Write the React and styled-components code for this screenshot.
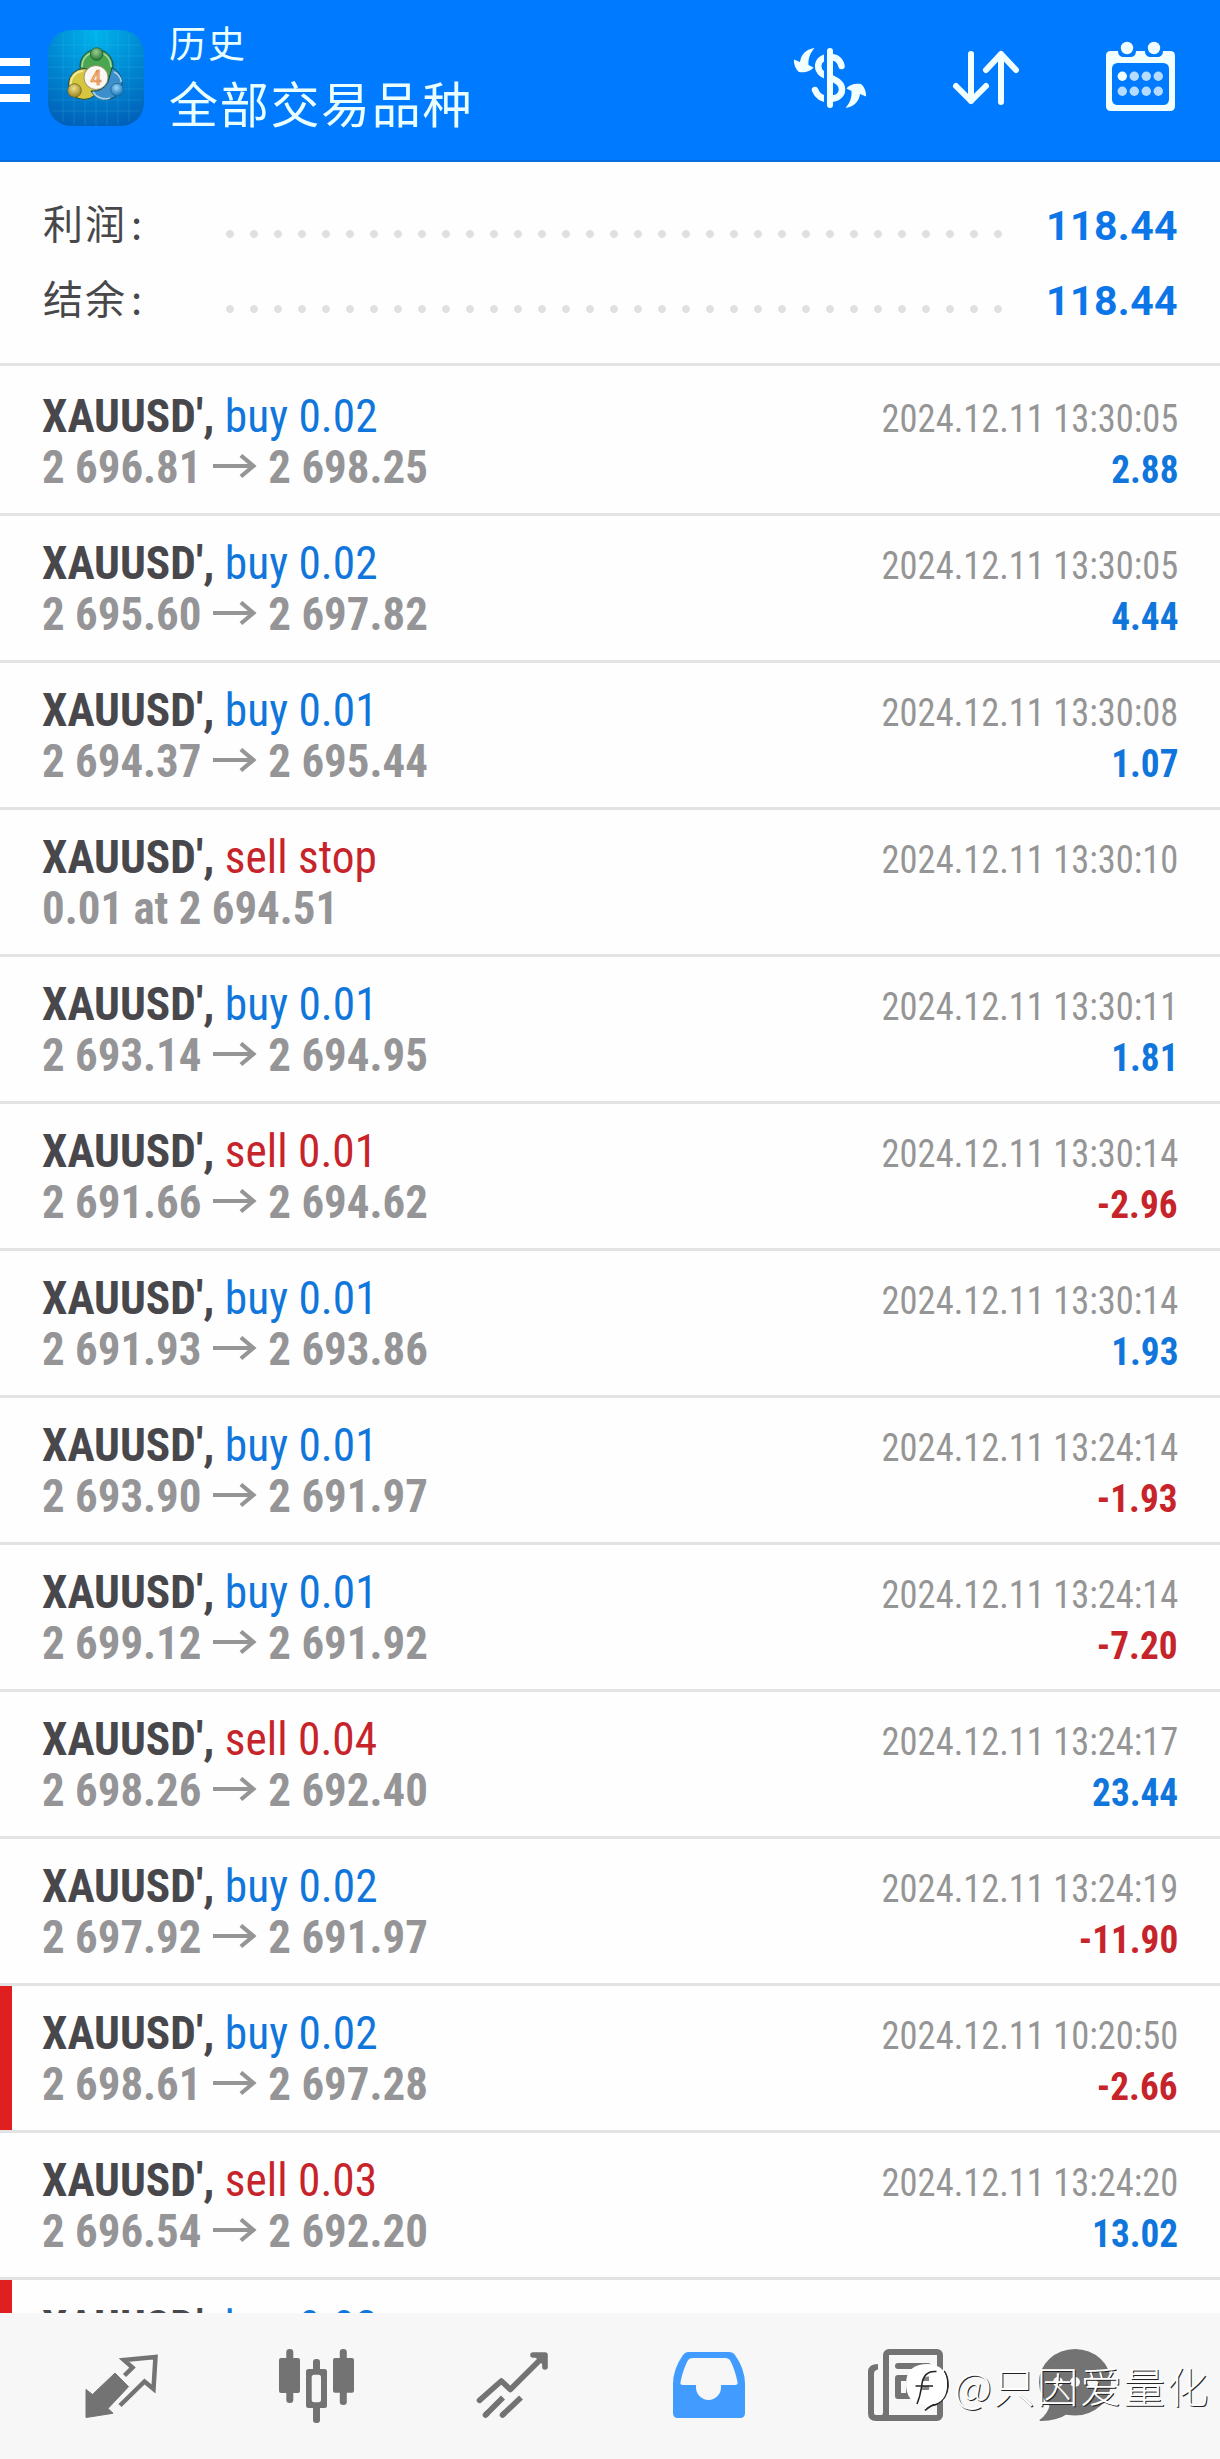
import React from "react";
import styled, { createGlobalStyle } from "styled-components";

const orders = [
  { type: "buy 0.02", open: "2 696.81", close: "2 698.25", time: "2024.12.11 13:30:05", profit: "2.88" },
  { type: "buy 0.02", open: "2 695.60", close: "2 697.82", time: "2024.12.11 13:30:05", profit: "4.44" },
  { type: "buy 0.01", open: "2 694.37", close: "2 695.44", time: "2024.12.11 13:30:08", profit: "1.07" },
  { type: "sell stop", pending: "0.01 at 2 694.51", time: "2024.12.11 13:30:10" },
  { type: "buy 0.01", open: "2 693.14", close: "2 694.95", time: "2024.12.11 13:30:11", profit: "1.81" },
  { type: "sell 0.01", open: "2 691.66", close: "2 694.62", time: "2024.12.11 13:30:14", profit: "-2.96" },
  { type: "buy 0.01", open: "2 691.93", close: "2 693.86", time: "2024.12.11 13:30:14", profit: "1.93" },
  { type: "buy 0.01", open: "2 693.90", close: "2 691.97", time: "2024.12.11 13:24:14", profit: "-1.93" },
  { type: "buy 0.01", open: "2 699.12", close: "2 691.92", time: "2024.12.11 13:24:14", profit: "-7.20" },
  { type: "sell 0.04", open: "2 698.26", close: "2 692.40", time: "2024.12.11 13:24:17", profit: "23.44" },
  { type: "buy 0.02", open: "2 697.92", close: "2 691.97", time: "2024.12.11 13:24:19", profit: "-11.90" },
  { type: "buy 0.02", open: "2 698.61", close: "2 697.28", time: "2024.12.11 10:20:50", profit: "-2.66", marked: true },
  { type: "sell 0.03", open: "2 696.54", close: "2 692.20", time: "2024.12.11 13:24:20", profit: "13.02" },
  { type: "buy 0.02", open: "", close: "", time: "", marked: true },
];

const DollarIcon = () => (
  <svg width="80" height="80" viewBox="0 0 80 80" fill="none">
    <path
      d="M51.500 28C50 21.500 46 19 40 19C32 19 28.200 23 28.200 28C28.200 35 34 37 40 39.500C48 42.500 52 46 52 51.500C52 58 46 61 38.500 61C31 61 27.500 58 25 52"
      stroke="#f2ffff"
      strokeWidth="6.500"
      strokeLinecap="round"
    />
    <path d="M35.500 12V68" stroke="#007aff" strokeWidth="3" />
    <path d="M40 13V67" stroke="#f2ffff" strokeWidth="6" strokeLinecap="round" />
    <path id="swap" d="M24.500 10C15 11.500 11 17 10 24L4 21.500C3.500 26 6 32 9 34C15 35 21 33 23.500 29.500L18.500 27C18 21 20 15 24.500 10Z" fill="#f2ffff" />
    <use href="#swap" transform="rotate(180 40 40)" />
  </svg>
);

const SortIcon = () => (
  <svg width="80" height="80" viewBox="-1 0 80 80" fill="none" stroke="#f2ffff" strokeWidth="6" strokeLinecap="round" strokeLinejoin="round">
    <path d="M25 16V63M10 48L25 63L40 48" />
    <path d="M55 64V16M40 32L55 16L70 32" />
  </svg>
);

const CalendarIcon = () => (
  <svg width="80" height="80" viewBox="0 0 80 80">
    <rect x="6" y="13" width="69" height="60" rx="4.500" fill="#f2ffff" />
    <rect x="12" y="25" width="57" height="42" rx="5.500" fill="#007aff" />
    {[27, 54].map((x) => (
      <g key={x}>
        <rect x={x - 9} y="1" width="18" height="18" rx="5.500" fill="#007aff" />
        <circle cx={x} cy="10" r="6.200" fill="#f2ffff" />
      </g>
    ))}
    {[38.3, 53.3].map((y) =>
      [22.3, 34.3, 46.3, 58.3].map((x) => (
        <circle key={x + "-" + y} cx={x} cy={y} r="4.700" fill={x === 22.3 && y === 38.3 ? "#f2ffff" : "#b5dcff"} />
      ))
    )}
  </svg>
);

const Logo = () => (
  <svg width="96" height="96" viewBox="0 0 96 96">
    <defs>
      <radialGradient id="tile" cx="50%" cy="5%" r="100%">
        <stop offset="0" stopColor="#00b4ec" />
        <stop offset="0.5" stopColor="#0088d2" />
        <stop offset="1" stopColor="#005fb8" />
      </radialGradient>
      <radialGradient id="green" cx="45%" cy="35%" r="60%">
        <stop offset="0" stopColor="#9bcf90" />
        <stop offset="1" stopColor="#2d7d3a" />
      </radialGradient>
      <radialGradient id="gold" cx="45%" cy="35%" r="60%">
        <stop offset="0" stopColor="#efe08a" />
        <stop offset="1" stopColor="#a08a24" />
      </radialGradient>
      <radialGradient id="sky" cx="45%" cy="35%" r="60%">
        <stop offset="0" stopColor="#9ed7f7" />
        <stop offset="1" stopColor="#1c78bd" />
      </radialGradient>
    </defs>
    <rect width="96" height="96" rx="23" fill="url(#tile)" />
    <path
      d="M15 4V92M26 1V95M37 0V96M48 0V96M59 0V96M70 1V95M81 4V92M4 15H92M1 26H95M0 37H96M0 48H96M0 59H96M1 70H95M4 81H92"
      stroke="#5cd3f5"
      strokeOpacity="0.16"
      strokeWidth="1"
    />
    <g stroke="#174a4c" strokeWidth="1">
      <circle cx="48.500" cy="36" r="16.500" fill="#4ba650" />
      <circle cx="36" cy="54" r="15.500" fill="#d5c53f" />
      <path d="M64 38A16.500 16.500 0 1 1 43 61Q55 62 60 52Z" fill="#3d8fcc" />
    </g>
    <g fill="none" strokeOpacity="0.75" strokeWidth="1.800">
      <path d="M23 56A13 13 0 0 1 35 41" stroke="#fbf6b8" />
      <path d="M34 37A15 15 0 0 1 43 23M54 23A15 15 0 0 1 63 37" stroke="#c8ecc0" />
      <path d="M66 42A13 13 0 0 1 73.500 52M45 62A14 14 0 0 0 62 68" stroke="#c6e8fb" />
    </g>
    <circle cx="48.700" cy="24" r="6.300" fill="url(#green)" stroke="#205f31" strokeWidth="0.800" />
    <circle cx="26.500" cy="60.500" r="6.800" fill="url(#gold)" stroke="#6d6422" strokeWidth="0.800" />
    <circle cx="69" cy="59.700" r="6.300" fill="url(#sky)" stroke="#1b649a" strokeWidth="0.800" />
    <circle cx="48" cy="47.500" r="12" fill="#fbf8f3" stroke="#8b7d54" strokeWidth="0.800" />
    <text x="48" y="54.500" textAnchor="middle" fontFamily="Roboto, sans-serif" fontSize="20" fontWeight="500" fill="#f3b27a" stroke="#e08b48" strokeWidth="0.600">
      4
    </text>
  </svg>
);

const ArrowIcon = () => (
  <svg width="46" height="26" viewBox="0 1 44 26" preserveAspectRatio="none" fill="none" stroke="#959595" strokeWidth="4.200">
    <path d="M0 13H41M28 2.500L40.500 13L28 23.500" />
  </svg>
);

const QuotesIcon = () => (
  <svg width="80" height="80" viewBox="0 0 80 80">
    <path d="M4 43.500L10.500 48.500L33 27L46.500 40.700L26 62.500L31 67.300L4 71.500Z" fill="#737373" stroke="#737373" strokeLinejoin="round" />
    <path d="M42.500 29.500L50.500 21.500L42 14L73.500 11L71.500 43L62.500 35.500L38 59.500" fill="none" stroke="#737373" strokeWidth="4.500" />
  </svg>
);

const ChartIcon = () => (
  <svg width="80" height="80" viewBox="0 0 80 80" fill="#737373">
    <rect x="10.300" y="3" width="7" height="54" rx="3.300" />
    <rect x="3" y="12" width="21" height="35" rx="2" />
    <rect x="37" y="13" width="7" height="64" rx="3" />
    <rect x="30" y="23" width="21" height="39" rx="2.500" />
    <rect x="35.700" y="28.700" width="9.300" height="27.600" rx="2.500" fill="#f7f7f7" />
    <rect x="63.800" y="3" width="7" height="56" rx="3.300" />
    <rect x="57" y="12" width="21" height="34.700" rx="2" />
  </svg>
);

const TradeIcon = () => (
  <svg width="80" height="80" viewBox="0 0 80 80" fill="none" stroke="#737373" strokeWidth="5.600">
    <path d="M6.500 54.300L28.300 35L37.300 43.500L71 10" strokeLinecap="round" strokeLinejoin="round" />
    <path d="M60 9H72V21" strokeLinecap="round" strokeLinejoin="round" />
    <path d="M64 9L72 17" />
    <path d="M12.500 69L30 51.500M29.500 69L48 51.500" />
    <path d="M12.500 69L14 67.500M29.500 69L31 67.500" strokeLinecap="round" />
  </svg>
);

const HistoryIcon = () => (
  <svg width="80" height="80" viewBox="0 0 80 80">
    <path
      d="M19 6H60Q64 6 66 9Q76 23 76 38V67Q76 72 71 72H9Q4 72 4 67V38Q4 23 14 9Q16 6 19 6Z"
      fill="#429bff"
    />
    <path
      d="M24 12H56Q60 12 61.500 15Q66 24 68.500 36Q69.300 39 66 39H52V41.500A12.500 12.500 0 0 1 27 41.500V39H14Q10.700 39 11.500 36Q14 24 18.500 15Q20 12 24 12Z"
      fill="#f7f7f7"
    />
  </svg>
);

const NewsIcon = () => (
  <svg width="80" height="80" viewBox="0 0 80 80">
    <path d="M12 18Q2 18 2 26V67Q2 75 10 75H40V69H17V18Z" fill="#737373" />
    <path d="M12 23.500Q8 24 8 28V67Q8 69 10 69H15Q17 69 17 67V23.500Z" fill="#f7f7f7" />
    <rect x="12" y="18" width="5" height="7" fill="#f7f7f7" />
    <rect x="20" y="6" width="54" height="66" rx="3" fill="#f7f7f7" stroke="#737373" strokeWidth="6" />
    <rect x="29" y="17" width="36" height="6" rx="3" fill="#737373" />
    <rect x="32" y="32" width="11" height="18" fill="none" stroke="#737373" strokeWidth="6" strokeLinejoin="round" />
  </svg>
);

const ChatIcon = () => (
  <svg width="80" height="80" viewBox="0 0 80 80">
    <ellipse cx="40" cy="36.300" rx="36" ry="33.300" fill="#737373" />
    <path d="M15 58Q13 68 4.500 74Q4 75 6 75Q22 75 34 67Z" fill="#737373" />
    <g fill="#f7f7f7">
      <circle cx="23" cy="36" r="5" />
      <circle cx="40" cy="36" r="5" />
      <circle cx="57" cy="36" r="5" />
    </g>
  </svg>
);

const BadgeIcon = () => (
  <svg width="46" height="52" viewBox="0 0 46 52">
    <path d="M40 10Q44 15 44 25Q43 38 32 43.500Q26 44 21 49.500" fill="none" stroke="#222" strokeWidth="1.800" />
    <path d="M20.500 49Q22 46 20 43.500Q2 42 2 23Q2 3 24 3Q43 4 43 23Q43 39 32 42.500Q26 43 20.500 49Z" fill="#fff" />
    <path d="M18 19Q20 15 25 15.500V20H17.500ZM18 25H25Q26 29 24 29H17Z" fill="#858585" />
    <path d="M13 43Q16 36 17.500 26Q19 9 32.500 10.500M11.500 25H29" fill="none" stroke="#222" strokeWidth="1.500" />
  </svg>
);

const App = () => {
  return (
    <Screen>
      <GlobalStyle />
      <Header>
        <Menu>
          <MenuLine />
          <MenuLine />
          <MenuLine />
        </Menu>
        <Logo />
        <Titles>
          <Subtitle>历史</Subtitle>
          <Title>全部交易品种</Title>
        </Titles>
        <Actions>
          <DollarIcon />
          <SortIcon />
          <CalendarIcon />
        </Actions>
      </Header>
      <Summary>
        <SummaryRow>
          <Label>
            利润<Colon>:</Colon>
          </Label>
          <Dots />
          <Total>118.44</Total>
        </SummaryRow>
        <SummaryRow>
          <Label>
            结余<Colon>:</Colon>
          </Label>
          <Dots />
          <Total>118.44</Total>
        </SummaryRow>
      </Summary>
      <List>
        {orders.map((order, index) => {
          return (
            <Row key={index} $marked={order.marked}>
              <Line>
                <Symbol>
                  XAUUSD', <Type $sell={order.type.startsWith("sell")}>{order.type}</Type>
                </Symbol>
                <Time>{order.time}</Time>
              </Line>
              <Line>
                {order.pending ? (
                  <Prices>
                    <Price>{order.pending}</Price>
                  </Prices>
                ) : (
                  <Prices>
                    <Price>{order.open}</Price>
                    <ArrowIcon />
                    <Price>{order.close}</Price>
                  </Prices>
                )}
                {order.profit && <Profit $loss={order.profit.startsWith("-")}>{order.profit}</Profit>}
              </Line>
            </Row>
          );
        })}
      </List>
      <TabBar>
        <QuotesIcon />
        <ChartIcon />
        <TradeIcon />
        <HistoryIcon />
        <NewsIcon />
        <ChatIcon />
        <Watermark>
          <BadgeIcon />
          <span>@只因爱量化</span>
        </Watermark>
      </TabBar>
    </Screen>
  );
};

const GlobalStyle = createGlobalStyle`
body {
  margin: 0;
  background: #fff;
}
* {
  box-sizing: border-box;
}
svg {
  display: block;
  flex-shrink: 0;
}
`;
const Screen = styled.div`
width: 1220px;
height: 2459px;
display: flex;
flex-direction: column;
overflow: hidden;
background: #fefefe;
font-family: Roboto, "Noto Sans CJK SC", sans-serif;
`;
const Header = styled.header`
height: 162px;
flex-shrink: 0;
display: flex;
align-items: flex-start;
padding-right: 40px;
background: #007aff;
border-bottom: 2px solid #0b6cdb;
> svg {
  margin-top: 30px;
}
`;
const Menu = styled.div`
width: 30px;
margin: 58px 18px 0 0;
display: flex;
flex-direction: column;
gap: 10px;
`;
const MenuLine = styled.div`
height: 8px;
background: #fff;
`;
const Titles = styled.div`
margin-left: 25px;
padding-top: 14px;
color: #eaffff;
font-family: "Noto Sans CJK SC", sans-serif;
white-space: nowrap;
`;
const Subtitle = styled.div`
font-size: 37px;
line-height: 56px;
letter-spacing: 2px;
`;
const Title = styled.div`
font-size: 49px;
line-height: 63px;
letter-spacing: 1.700px;
`;
const Actions = styled.div`
margin: 38px 0 0 auto;
display: flex;
gap: 75px;
`;
const Summary = styled.section`
height: 204px;
flex-shrink: 0;
padding: 26px 43px 0 43px;
border-bottom: 3px solid #e3e3e3;
`;
const SummaryRow = styled.div`
height: 75px;
display: flex;
align-items: center;
`;
const Label = styled.div`
width: 175px;
margin-top: -8px;
color: #48484a;
font-family: "Noto Sans CJK SC", sans-serif;
font-size: 40px;
letter-spacing: 2px;
`;
const Colon = styled.span`
margin-left: 4px;
`;
const Dots = styled.div`
width: 792px;
height: 8px;
margin-top: 16px;
background: radial-gradient(circle at 12px 4px, #e0e0e0 3.600px, transparent 4.300px) 0 0 / 24px 8px;
`;
const Total = styled.div`
margin: 0 -1px 0 auto;
color: #0c76e8;
font-size: 41px;
font-weight: 700;
letter-spacing: 0.400px;
`;
const List = styled.main`
flex: 1;
min-height: 0;
overflow: hidden;
padding-top: 3px;
`;
const Row = styled.div`
height: 147px;
padding: 21px 42px 0 42px;
border-bottom: 3px solid #e3e3e3;
box-shadow: ${(props) => (props.$marked ? "inset 12px 0 0 #df1f20" : "none")};
font-stretch: 75%;
`;
const Line = styled.div`
height: 51px;
line-height: 51px;
display: flex;
justify-content: space-between;
align-items: baseline;
white-space: nowrap;
`;
const Symbol = styled.div`
color: #48484c;
font-size: 47px;
font-weight: 700;
transform: scaleX(0.965);
transform-origin: left;
`;
const Type = styled.span`
color: ${(props) => (props.$sell ? "#c6242a" : "#1076dc")};
font-weight: 400;
`;
const Time = styled.div`
color: #959595;
font-size: 39px;
transform: scaleX(0.935);
transform-origin: right;
`;
const Prices = styled.div`
display: flex;
align-items: center;
gap: 12px;
transform: scaleX(0.955);
transform-origin: left;
`;
const Price = styled.div`
color: #959597;
font-size: 47px;
font-weight: 700;
`;
const Profit = styled.div`
color: ${(props) => (props.$loss ? "#c6242a" : "#1076dc")};
font-size: 39px;
font-weight: 700;
transform: scaleX(0.955);
transform-origin: right;
`;
const TabBar = styled.nav`
height: 146px;
flex-shrink: 0;
position: relative;
display: grid;
grid-template-columns: 196px 192px 202px 190px 204px 134px;
justify-items: center;
align-items: center;
padding-left: 24px;
background: #f7f7f7;
`;
const Watermark = styled.div`
position: absolute;
left: 904px;
top: 46px;
display: flex;
align-items: center;
gap: 4px;
color: #fff;
font-family: "Noto Sans CJK SC", sans-serif;
font-size: 41.500px;
font-weight: 300;
letter-spacing: 1.800px;
line-height: 58px;
text-shadow: 1px 1px 0 #222;
white-space: nowrap;
span {
  margin-top: -3px;
}
`;

export default App;
